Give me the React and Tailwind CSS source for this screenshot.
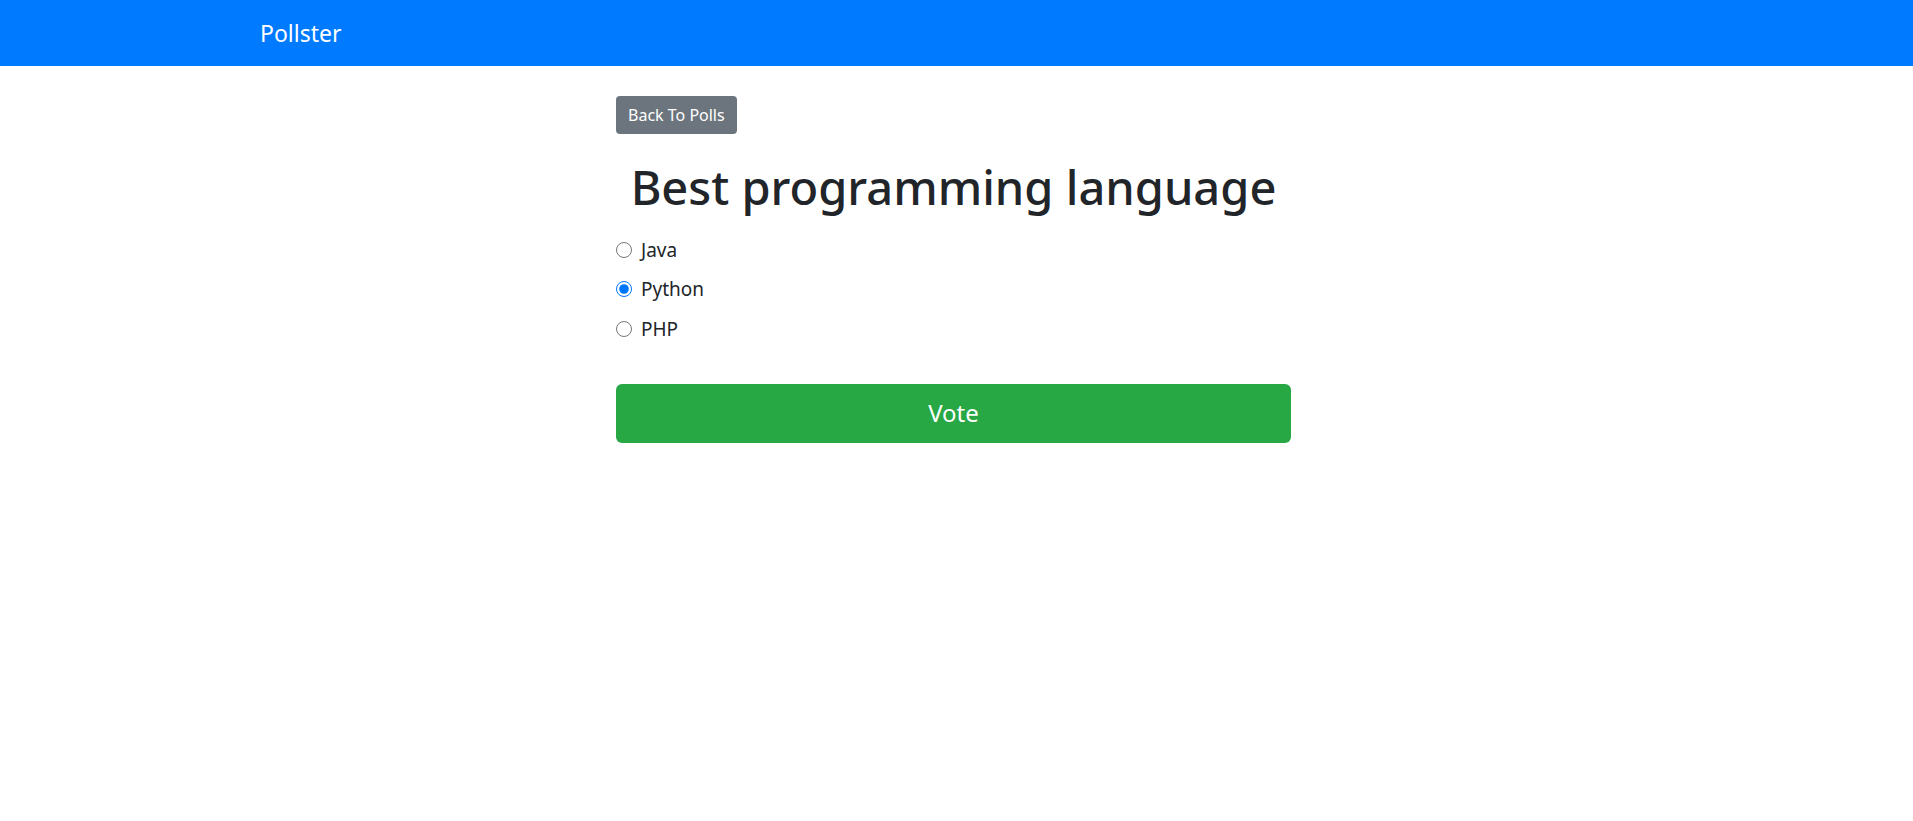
import React, { useState } from "react";

export default function App() {
  const [choice, setChoice] = useState("Python");
  const options = ["Java", "Python", "PHP"];
  return (
    <div className="min-h-[821px] bg-white text-[#212529]" style={{ fontFamily: '"Noto Sans", "Open Sans", sans-serif' }}>
      <nav className="h-[66px] bg-[#007bff] flex items-center pl-[260px]">
        <a className="text-white text-[23px] leading-[36px]" href="#">Pollster</a>
      </nav>
      <main className="ml-[616px] w-[675px] pt-[30px]">
        <button className="h-[38px] px-[12px] rounded-[4px] bg-[#6c757d] text-white text-[16px] leading-[24px]">
          Back To Polls
        </button>
        <h1 className="text-center text-[47px] leading-[58px] font-medium mt-[24px] mb-[14px]">
          Best programming language
        </h1>
        <div className="flex flex-col">
          {options.map((o) => (
            <label key={o} className="flex items-center h-[39.5px] text-[19px]">
              <input
                type="radio"
                name="poll"
                checked={choice === o}
                onChange={() => setChoice(o)}
                className="w-[16px] h-[16px] m-0 mr-[9px] accent-[#0075ff]"
              />
              {o}
            </label>
          ))}
        </div>
        <button className="mt-[35px] w-full h-[59px] rounded-[6px] bg-[#28a745] text-white text-[24px]">
          Vote
        </button>
      </main>
    </div>
  );
}
